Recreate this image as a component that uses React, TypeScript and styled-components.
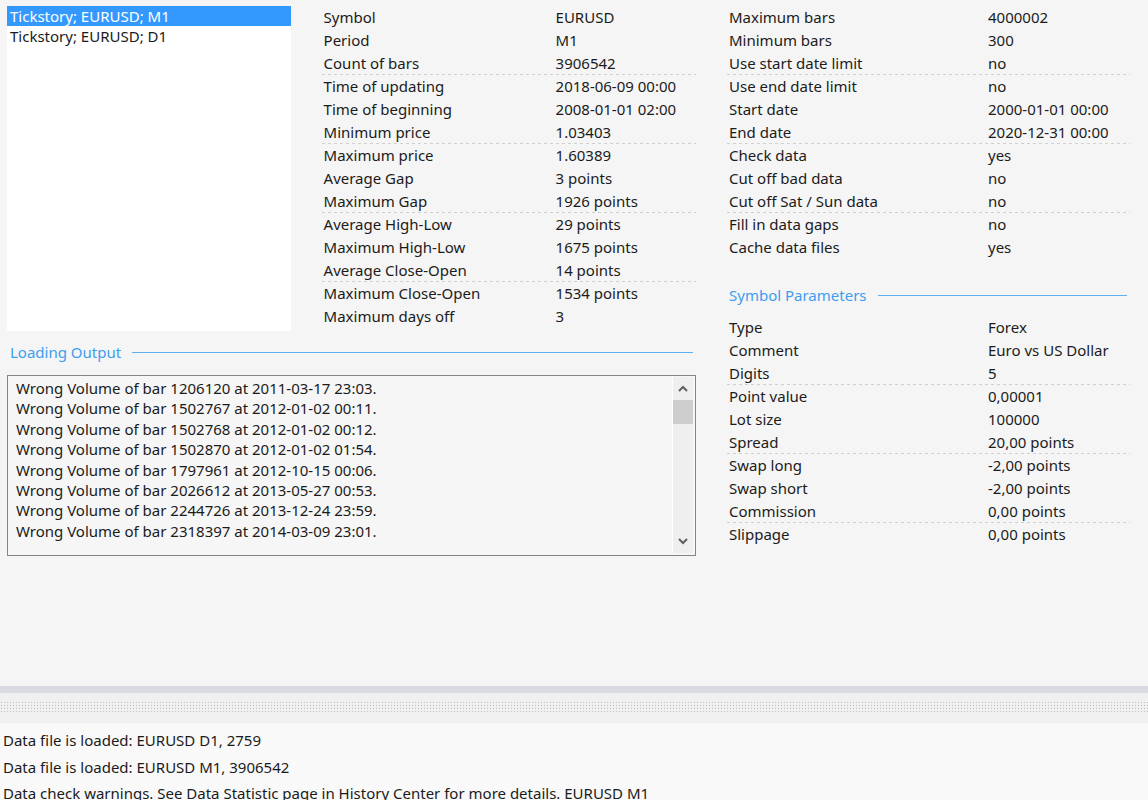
import React from 'react';
import styled, { createGlobalStyle } from 'styled-components';

const GlobalStyle = createGlobalStyle`
  html, body {
    margin: 0;
    padding: 0;
    background: #f5f5f5;
  }
  * {
    box-sizing: border-box;
  }
`;

type Stat = [string, string];

const dataStats: Stat[] = [
  ['Symbol', 'EURUSD'],
  ['Period', 'M1'],
  ['Count of bars', '3906542'],
  ['Time of updating', '2018-06-09 00:00'],
  ['Time of beginning', '2008-01-01 02:00'],
  ['Minimum price', '1.03403'],
  ['Maximum price', '1.60389'],
  ['Average Gap', '3 points'],
  ['Maximum Gap', '1926 points'],
  ['Average High-Low', '29 points'],
  ['Maximum High-Low', '1675 points'],
  ['Average Close-Open', '14 points'],
  ['Maximum Close-Open', '1534 points'],
  ['Maximum days off', '3'],
];

const settings: Stat[] = [
  ['Maximum bars', '4000002'],
  ['Minimum bars', '300'],
  ['Use start date limit', 'no'],
  ['Use end date limit', 'no'],
  ['Start date', '2000-01-01 00:00'],
  ['End date', '2020-12-31 00:00'],
  ['Check data', 'yes'],
  ['Cut off bad data', 'no'],
  ['Cut off Sat / Sun data', 'no'],
  ['Fill in data gaps', 'no'],
  ['Cache data files', 'yes'],
];

const symbolParams: Stat[] = [
  ['Type', 'Forex'],
  ['Comment', 'Euro vs US Dollar'],
  ['Digits', '5'],
  ['Point value', '0,00001'],
  ['Lot size', '100000'],
  ['Spread', '20,00 points'],
  ['Swap long', '-2,00 points'],
  ['Swap short', '-2,00 points'],
  ['Commission', '0,00 points'],
  ['Slippage', '0,00 points'],
];

const outputLines = [
  'Wrong Volume of bar 1206120 at 2011-03-17 23:03.',
  'Wrong Volume of bar 1502767 at 2012-01-02 00:11.',
  'Wrong Volume of bar 1502768 at 2012-01-02 00:12.',
  'Wrong Volume of bar 1502870 at 2012-01-02 01:54.',
  'Wrong Volume of bar 1797961 at 2012-10-15 00:06.',
  'Wrong Volume of bar 2026612 at 2013-05-27 00:53.',
  'Wrong Volume of bar 2244726 at 2013-12-24 23:59.',
  'Wrong Volume of bar 2318397 at 2014-03-09 23:01.',
];

const logLines = [
  'Data file is loaded: EURUSD D1, 2759',
  'Data file is loaded: EURUSD M1, 3906542',
  'Data check warnings. See Data Statistic page in History Center for more details. EURUSD M1',
];

const Page = styled.div`
  width: 1148px;
  height: 800px;
  overflow: hidden;
  display: flex;
  flex-direction: column;
  font-family: 'Noto Sans', 'Open Sans', sans-serif;
  font-size: 15px;
  color: #1b1b1b;
`;

const Main = styled.div`
  height: 686px;
  flex-shrink: 0;
  display: flex;
  padding: 6px 0 0 7px;
  gap: 31px;
`;

const LeftColumn = styled.div`
  width: 689px;
  display: flex;
  flex-direction: column;
`;

const TopRow = styled.div`
  display: flex;
  gap: 31px;
  height: 325px;
`;

const ListBox = styled.div`
  width: 284px;
  height: 325px;
  background: #ffffff;
`;

const ListItem = styled.div<{ $selected?: boolean }>`
  height: 20px;
  line-height: 20px;
  padding-left: 3px;
  white-space: nowrap;
  background: ${(p) => (p.$selected ? '#3399ff' : 'transparent')};
  color: ${(p) => (p.$selected ? '#ffffff' : '#1b1b1b')};
`;

const StatTable = styled.div<{ $width: number; $top?: number }>`
  width: ${(p) => p.$width}px;
  margin-top: ${(p) => p.$top ?? 0}px;
  display: flex;
  flex-direction: column;
`;

const StatRow = styled.div<{ $valueAt: number }>`
  height: 23px;
  display: grid;
  grid-template-columns: ${(p) => p.$valueAt}px 1fr;
  align-items: center;
  padding: 0 0 2px 2px;
  white-space: nowrap;

  &:nth-child(3n):not(:last-child) {
    background: repeating-linear-gradient(to right, #d0d0d0 0 3px, transparent 3px 6px)
      left bottom / 100% 1px no-repeat;
  }
`;

const SectionHeader = styled.div<{ $top: number; $left: number }>`
  display: flex;
  align-items: center;
  gap: 11px;
  height: 20px;
  margin-top: ${(p) => p.$top}px;
  padding: 0 3px 0 ${(p) => p.$left}px;
  color: #3d9ef0;
  white-space: nowrap;

  &::after {
    content: '';
    flex: 1;
    height: 1px;
    background: #5cb0f2;
  }
`;

const OutputBox = styled.div`
  margin-top: 13px;
  height: 181px;
  border: 1px solid #848484;
  background: #f6f6f6;
  display: flex;
`;

const OutputText = styled.div`
  flex: 1;
  padding: 2px 0 0 8px;
  line-height: 20.4px;
  white-space: nowrap;
  overflow: hidden;
`;

const ScrollBar = styled.div`
  width: 21px;
  margin: 1px 2px 2px 0;
  background: #efefef;
  border-left: 1px solid #ffffff;
  display: flex;
  flex-direction: column;
  align-items: center;
`;

const ScrollArrow = styled.div`
  height: 23px;
  width: 100%;
  display: flex;
  align-items: center;
  justify-content: center;
`;

const ScrollThumb = styled.div`
  width: 20px;
  height: 24px;
  background: #cdcdcd;
`;

const ScrollTrack = styled.div`
  flex: 1;
`;

const RightColumn = styled.div`
  width: 403px;
  display: flex;
  flex-direction: column;
`;

const Splitter = styled.div`
  height: 37px;
  flex-shrink: 0;
  display: flex;
  flex-direction: column;
  background: #f0f0f0;
`;

const SplitBand = styled.div`
  height: 7px;
  background: #dadae3;
`;

const Grip = styled.div`
  margin-top: 8px;
  height: 13px;
  background-image: radial-gradient(circle, #bdbdc4 0.7px, transparent 0.9px);
  background-size: 3px 3px;
`;

const LogPanel = styled.div`
  flex: 1;
  min-height: 0;
  overflow: hidden;
  background: #f9f9f9;
  padding: 4px 0 0 3px;
`;

const LogLine = styled.div`
  height: 26.5px;
  line-height: 26.5px;
  white-space: nowrap;
`;

const Chevron = ({ up }: { up?: boolean }) => (
  <svg width="10" height="7" viewBox="0 0 10 7">
    <path
      d={up ? 'M1 6 L5 2 L9 6' : 'M1 1 L5 5 L9 1'}
      fill="none"
      stroke="#606060"
      strokeWidth="2"
    />
  </svg>
);

const Stats = ({
  rows,
  width,
  valueAt,
  top,
}: {
  rows: Stat[];
  width: number;
  valueAt: number;
  top?: number;
}) => (
  <StatTable $width={width} $top={top}>
    {rows.map(([label, value]) => (
      <StatRow key={label} $valueAt={valueAt}>
        <span>{label}</span>
        <span>{value}</span>
      </StatRow>
    ))}
  </StatTable>
);

export default function App() {
  return (
    <>
      <GlobalStyle />
      <Page>
        <Main>
          <LeftColumn>
            <TopRow>
              <ListBox>
                <ListItem $selected>Tickstory; EURUSD; M1</ListItem>
                <ListItem>Tickstory; EURUSD; D1</ListItem>
              </ListBox>
              <Stats rows={dataStats} width={375} valueAt={232} />
            </TopRow>
            <SectionHeader $top={11} $left={3}>
              Loading Output
            </SectionHeader>
            <OutputBox>
              <OutputText>
                {outputLines.map((line) => (
                  <div key={line}>{line}</div>
                ))}
              </OutputText>
              <ScrollBar>
                <ScrollArrow>
                  <Chevron up />
                </ScrollArrow>
                <ScrollThumb />
                <ScrollTrack />
                <ScrollArrow>
                  <Chevron />
                </ScrollArrow>
              </ScrollBar>
            </OutputBox>
          </LeftColumn>
          <RightColumn>
            <Stats rows={settings} width={403} valueAt={259} />
            <SectionHeader $top={26} $left={2}>
              Symbol Parameters
            </SectionHeader>
            <Stats rows={symbolParams} width={403} valueAt={259} top={11} />
          </RightColumn>
        </Main>
        <Splitter>
          <SplitBand />
          <Grip />
        </Splitter>
        <LogPanel>
          {logLines.map((line) => (
            <LogLine key={line}>{line}</LogLine>
          ))}
        </LogPanel>
      </Page>
    </>
  );
}
